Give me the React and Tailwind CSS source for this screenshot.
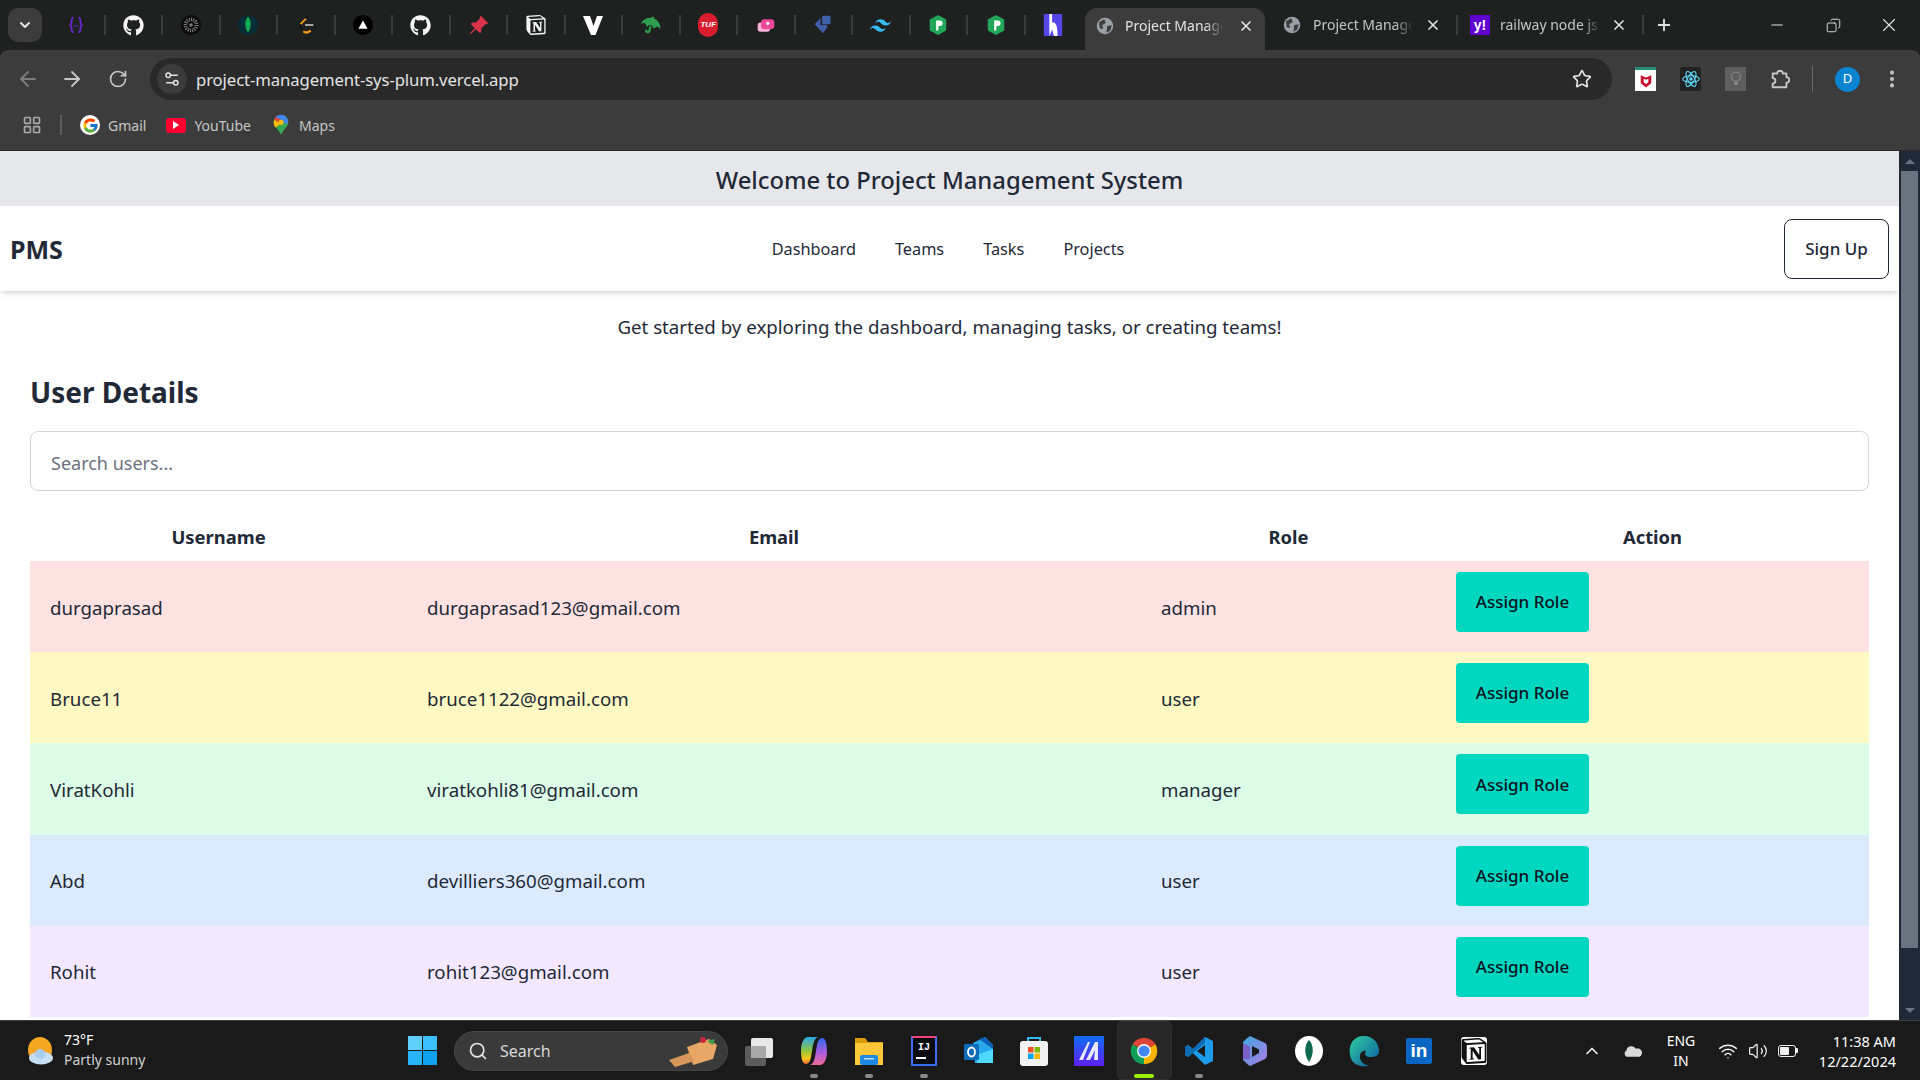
import React from "react";
import { ArrowLeft, ArrowRight, RotateCw, Star, EllipsisVertical, X, Plus, Minus, Copy, LayoutGrid, Search, ChevronDown, ChevronUp, Wifi, Volume2, Settings2 } from "lucide-react";
import { FaGithub, FaUmbrella } from "react-icons/fa";
import { SiNotion, SiTailwindcss } from "react-icons/si";
import { FcGoogle } from "react-icons/fc";
import { BsPinAngleFill } from "react-icons/bs";

const S = ({ children, size = 20, view = "0 0 24 24" }) => (
  <svg width={size} height={size} viewBox={view} className="block shrink-0">{children}</svg>
);

const PHex = () => (
  <S size={22}>
    <path d="M12 1 L21 6 V18 L12 23 L3 18 V6 Z" fill="#22a75a" />
    <path d="M10 7 H14 A3 3 0 0 1 14 13 H12.4 V18 H10 Z" fill="#fff" />
  </S>
);

const EarthGlobe = () => (
  <S size={18}>
    <circle cx="12" cy="12" r="11" fill="#9aa0a6" />
    <path d="M4 7 L11 3 L13 8 L8 11 L10 16 L5 15 Z" fill="#3c3c3c" />
    <path d="M15 12 L21 11 L19 18 L14 21 Z" fill="#3c3c3c" />
  </S>
);

const tabIcons = [
  <S key="a"><path d="M9 3 C6 3 7 7 6.500 10 C6 11.500 5 12 4 12 C5 12 6 12.500 6.500 14 C7 17 6 21 9 21 M15 3 C18 3 17 7 17.500 10 C18 11.500 19 12 20 12 C19 12 18 12.500 17.500 14 C17 17 18 21 15 21" stroke="#6d28d9" strokeWidth="2" fill="none" /><path d="M9 12 Q10 14 12 13 Q14 14 15 12" stroke="#6d28d9" strokeWidth="1" fill="none" /></S>,
  <FaGithub key="b" size={21} color="#f5f5f5" />,
  <S key="c" size={22}><circle cx="12" cy="12" r="11" fill="#0b0b0b" /><circle cx="12" cy="12" r="6" fill="none" stroke="#8b8b8b" strokeWidth="4" strokeDasharray="1 1.300" /><circle cx="12" cy="12" r="2" fill="#777" /></S>,
  <S key="d" size={22}><circle cx="12" cy="12" r="11" fill="#062f38" /><path d="M12 3 C16 7 16 15 12 20 C8 15 8 7 12 3 Z" fill="#13aa52" /></S>,
  <S key="e" size={22}><path d="M14 2 L7 10 C5 13 6 16 8 17" stroke="#111" strokeWidth="2" fill="none" /><path d="M12 5 L6 11" stroke="#f89f1b" strokeWidth="2" fill="none" /><path d="M9 19 C12 21 15 20 17 18" stroke="#f89f1b" strokeWidth="2.400" fill="none" /><path d="M11 12 H20" stroke="#b3b3b3" strokeWidth="2" /></S>,
  <S key="f" size={22}><circle cx="12" cy="12" r="11" fill="#000" /><path d="M12 7 L17 16 H7 Z" fill="#fff" /></S>,
  <FaGithub key="g" size={21} color="#f5f5f5" />,
  <BsPinAngleFill key="h" size={21} color="#d9344a" />,
  <SiNotion key="i" size={20} color="#f5f5f5" />,
  <S key="j" size={24}><path d="M2 3 H9 L12.500 13 L16 3 H22 L14.500 22 H10 Z" fill="#fff" /></S>,
  <FaUmbrella key="k" size={20} color="#2f9e4f" style={{ transform: "rotate(15deg)" }} />,
  <div key="l" className="w-5 h-6 rounded-full bg-[#d91c2e] flex items-center justify-center text-[8px] font-black italic text-white leading-none font-['Liberation_Sans',sans-serif]">TUF</div>,
  <S key="m"><rect x="2" y="9" width="15" height="11" rx="3.500" fill="#f8b4d9" /><rect x="6" y="5" width="16" height="12" rx="4" fill="#ec4899" /><circle cx="14" cy="10" r="2" fill="#fff" /></S>,
  <S key="n"><path d="M2 11 L9 4 V12 H17 V15 L12 22 Z" fill="#3f5fa8" /><rect x="11" y="1" width="10" height="10" rx="1" fill="#3f5fa8" /></S>,
  <SiTailwindcss key="o" size={21} color="#38bdf8" />,
  <PHex key="p" />,
  <PHex key="q" />,
  <S key="r" size={22}><rect x="2" y="0" width="20" height="24" fill="#5546e8" /><path d="M8 0 H11 V9 C15 9 17 12 17 24 H13 L11 17 L8 24 Z" fill="#fff" /></S>,
];

const TabSep = () => <div className="w-[2px] h-[20px] bg-[#3a3c3c] shrink-0" />;

const TabLabel = ({ w, children, active }) => (
  <div className={`${w} overflow-hidden whitespace-nowrap text-[14px] -mt-[2px] [mask-image:linear-gradient(to_right,black_82%,transparent)] ${active ? "text-[#e3e3e3]" : "text-[#c4c7c5]"}`}>{children}</div>
);

const TabStrip = () => (
  <div className="h-[50px] bg-[#1f2121] flex items-end shrink-0">
    <div className="self-start mt-[8px] ml-[8px] w-[34px] h-[34px] rounded-[10px] bg-[#3c3c3c] flex items-center justify-center shrink-0">
      <ChevronDown size={16} color="#e3e3e3" strokeWidth={3} />
    </div>
    <div className="self-start flex items-center h-[50px] ml-[6px] shrink-0">
      {tabIcons.map((ic, i) => (
        <React.Fragment key={i}>
          <div className="w-[55.5px] h-[50px] flex items-center justify-center shrink-0">{ic}</div>
          {i < tabIcons.length - 1 && <TabSep />}
        </React.Fragment>
      ))}
    </div>
    <div className="w-[180px] h-[42px] ml-[4px] bg-[#3c3c3c] rounded-t-[12px] flex items-center pl-[11px] gap-[11px] shrink-0 pb-[6px]">
      <EarthGlobe />
      <TabLabel w="w-[98px]" active>Project Management</TabLabel>
      <X size={16} color="#e3e3e3" className="ml-[4px]" strokeWidth={2.500} />
    </div>
    <div className="w-[191px] h-[50px] flex items-center pl-[18px] gap-[12px] shrink-0">
      <EarthGlobe />
      <TabLabel w="w-[100px]">Project Management</TabLabel>
      <X size={16} color="#e3e3e3" strokeWidth={2.500} />
    </div>
    <div className="self-center"><TabSep /></div>
    <div className="w-[184px] h-[50px] flex items-center pl-[12px] gap-[10px] shrink-0">
      <div className="w-5 h-5 bg-[#5f01d1] flex items-center justify-center text-white font-bold text-[14px] leading-none font-['Liberation_Sans',sans-serif]">y!</div>
      <TabLabel w="w-[101px]">railway node js deploy</TabLabel>
      <X size={16} color="#e3e3e3" strokeWidth={2.500} />
    </div>
    <div className="self-center"><TabSep /></div>
    <div className="self-center ml-[11px]"><Plus size={18} color="#e3e3e3" strokeWidth={2.500} /></div>
    <div className="self-center ml-auto flex items-center shrink-0 pr-[3px]">
      <div className="w-[56px] flex justify-center"><Minus size={18} color="#e3e3e3" strokeWidth={1.500} /></div>
      <div className="w-[56px] flex justify-center"><Copy size={15} color="#e3e3e3" strokeWidth={1.500} className="-scale-x-100" /></div>
      <div className="w-[56px] flex justify-center"><X size={22} color="#e3e3e3" strokeWidth={1.200} /></div>
    </div>
  </div>
);

const Toolbar = () => (
  <div className="h-[50px] bg-[#3c3c3c] flex items-end shrink-0 rounded-t-[8px]">
    <div className="h-[50px] pt-[8px] flex items-center w-[150px] pl-[16px] gap-[20px] shrink-0">
      <ArrowLeft size={24} color="#7b7b7b" strokeWidth={1.800} />
      <ArrowRight size={24} color="#c4c7c5" strokeWidth={1.800} />
      <RotateCw size={20} color="#c4c7c5" strokeWidth={2} className="ml-[4px]" />
    </div>
    <div className="w-[1462px] h-[42px] rounded-[21px] bg-[#292929] flex items-center pl-[7px] shrink-0">
      <div className="w-[30px] h-[30px] rounded-full bg-[#3c3c3c] flex items-center justify-center">
        <Settings2 size={18} color="#e3e3e3" />
      </div>
      <div className="ml-[9px] mt-[1px] text-[#e3e3e3] text-[16.7px] tracking-[-0.1px]">project-management-sys-plum.vercel.app</div>
      <div className="ml-auto mr-[20px]"><Star size={20} color="#e3e3e3" strokeWidth={2} /></div>
    </div>
    <div className="h-[50px] pt-[8px] flex items-center shrink-0 pl-[23px]">
      <div className="w-[21px] h-[24px] bg-white flex flex-col">
        <div className="h-[3px] bg-[#2a8d7a]" />
        <div className="flex-1 flex items-center justify-center">
          <S size={14}><path d="M3 2 L12 6 L21 2 V16 L12 23 L3 16 Z" fill="#c8102e" /><path d="M8 8 L12 10 L16 8 V14 L12 17 L8 14 Z" fill="#fff" /></S>
        </div>
      </div>
      <div className="ml-[24px] w-[21px] h-[24px] rounded-[2px] bg-[#222] flex items-center justify-center">
        <S size={20}><g fill="none" stroke="#61dafb" strokeWidth="1.300"><ellipse cx="12" cy="12" rx="10" ry="4" /><ellipse cx="12" cy="12" rx="10" ry="4" transform="rotate(60 12 12)" /><ellipse cx="12" cy="12" rx="10" ry="4" transform="rotate(120 12 12)" /></g><circle cx="12" cy="12" r="2" fill="#61dafb" /></S>
      </div>
      <div className="ml-[24px] w-[21px] h-[24px] bg-[#5f5f5f] flex items-center justify-center">
        <S size={18}><circle cx="12" cy="9" r="6" fill="none" stroke="#8a8a8a" strokeWidth="1.500" /><rect x="9.500" y="16" width="5" height="4" fill="#8a8a8a" /></S>
      </div>
      <div className="ml-[23px]">
        <S size={22}><path d="M4 6 H9 A3 3 0 0 1 15 6 H19 V10 A3 3 0 0 1 19 16 V21 H4 V17 C6 17 7 15.500 7 14 S6 11 4 11 Z" fill="none" stroke="#c4c7c5" strokeWidth="2" strokeLinejoin="round" /></S>
      </div>
      <div className="ml-[21px] w-[1px] h-[26px] bg-[#6a6a6a]" />
      <div className="ml-[22px] w-[25px] h-[25px] rounded-full bg-[#0b84d1] flex items-center justify-center text-[13px] text-white">D</div>
      <div className="ml-[21px]"><EllipsisVertical size={22} color="#c4c7c5" strokeWidth={2.500} /></div>
    </div>
  </div>
);

const Bookmark = ({ icon, label, ml }) => (
  <div className={`flex items-center gap-[8px] ${ml}`}>
    <div className="w-[20px] h-[20px] flex items-center justify-center">{icon}</div>
    <span className="text-[14px] mt-[1px] text-[#c4c7c5]">{label}</span>
  </div>
);

const Bookmarks = () => (
  <div className="h-[50px] bg-[#3c3c3c] flex items-center pl-[22px] shrink-0">
    <LayoutGrid size={20} color="#a8a8a8" strokeWidth={2} />
    <div className="ml-[18px] w-[2px] h-[20px] bg-[#5c5c5c]" />
    <Bookmark ml="ml-[18px]" label="Gmail" icon={<div className="w-5 h-5 rounded-full bg-white flex items-center justify-center"><FcGoogle size={17} /></div>} />
    <Bookmark ml="ml-[20px]" label="YouTube" icon={<div className="w-5 h-[15px] rounded-[3px] bg-[#ff0033] flex items-center justify-center"><div className="w-0 h-0 border-y-[4px] border-y-transparent border-l-[6px] border-l-white" /></div>} />
    <Bookmark ml="ml-[20px]" label="Maps" icon={<S size={22}><path d="M12 1 C7 1 4 5 4 9 C4 14 10 17 12 23 C14 17 20 14 20 9 C20 5 17 1 12 1 Z" fill="#34a853" /><path d="M18 3.500 L12 9 L19 11 C20 9 20 6 18 3.500 Z" fill="#4285f4" /><path d="M5 6 L11 11 L6 15 C4.500 13 4 11 4 9 Z" fill="#fbbc04" /><path d="M6 3 C9 0 15 0 18 3.500 L14 8 Z" fill="#4285f4" /><path d="M6 3 L5 6 L11 11 L14 8 Z" fill="#ea4335" /><circle cx="12" cy="9" r="2.800" fill="#fbbc04" /></S>} />
  </div>
);

const rows = [
  ["durgaprasad", "durgaprasad123@gmail.com", "admin", "bg-[#fee2e2]"],
  ["Bruce11", "bruce1122@gmail.com", "user", "bg-[#fef9c3]"],
  ["ViratKohli", "viratkohli81@gmail.com", "manager", "bg-[#dcfce7]"],
  ["Abd", "devilliers360@gmail.com", "user", "bg-[#dbeafe]"],
  ["Rohit", "rohit123@gmail.com", "user", "bg-[#f3e8ff]"],
];

const UserTable = () => (
  <table className="w-full table-fixed border-collapse">
    <colgroup>
      <col className="w-[377px]" />
      <col className="w-[734px]" />
      <col className="w-[295px]" />
      <col className="w-[433px]" />
    </colgroup>
    <thead>
      <tr className="h-[46px] text-[18.4px] text-[#1f2937]">
        <th className="font-bold pb-[3px]">Username</th>
        <th className="font-bold pb-[3px]">Email</th>
        <th className="font-bold pb-[3px]">Role</th>
        <th className="font-bold pb-[3px]">Action</th>
      </tr>
    </thead>
    <tbody>
      {rows.map((r) => (
        <tr key={r[0]} className={`${r[3]} h-[91.2px] text-[18.7px] text-[#1f2937]`}>
          <td className="px-[20px] pt-[2px]">{r[0]}</td>
          <td className="px-[20px] pt-[2px]">{r[1]}</td>
          <td className="px-[20px] pt-[2px]">{r[2]}</td>
          <td className="px-[20px] align-top pt-[11px]">
            <button className="w-[133px] h-[60px] rounded-[4px] bg-[#00d7c0] text-[17px] font-medium text-[#0b1320]">Assign Role</button>
          </td>
        </tr>
      ))}
    </tbody>
  </table>
);

const Page = () => (
  <div className="flex flex-1 min-h-0 border-t border-[#2a2a2a]">
    <div className="flex-1 min-w-0 bg-white overflow-hidden text-[#1f2937]">
      <div className="h-[55px] pt-[4px] bg-[#e5e7eb] flex items-center justify-center text-[23.8px] font-medium">Welcome to Project Management System</div>
      <nav className="h-[85px] bg-white shadow-md flex items-center justify-between pl-[10px] pr-[10px] relative">
        <div className="text-[25px] font-bold w-[100px] pt-[2px]">PMS</div>
        <div className="flex items-center gap-[39px] text-[16.3px] pt-[2px] translate-x-[1px]">
          <span>Dashboard</span>
          <span>Teams</span>
          <span>Tasks</span>
          <span>Projects</span>
        </div>
        <button className="w-[105px] h-[60px] rounded-[8px] border border-[#1f2937] text-[17px] font-medium">Sign Up</button>
      </nav>
      <p className="text-center text-[18.7px] leading-[28px] pt-[22px]">Get started by exploring the dashboard, managing tasks, or creating teams!</p>
      <div className="px-[30px] pt-[33px]">
        <h2 className="text-[28px] leading-[36px] font-bold">User Details</h2>
        <input
          readOnly
          placeholder="Search users..."
          className="mt-[21px] mb-[24px] block w-full h-[60px] rounded-[8px] border border-[#d1d5db] pl-[20px] pr-[20px] pt-[3px] text-[18px] placeholder:text-[#6b7280] outline-none"
        />
        <UserTable />
      </div>
    </div>
    <div className="w-[21px] bg-[#1f2937] flex flex-col items-center shrink-0 px-[2px]">
      <div className="h-[20px] flex items-center justify-center">
        <div className="w-0 h-0 border-x-[5px] border-x-transparent border-b-[5px] border-b-[#6b7280]" />
      </div>
      <div className="w-full h-[777px] bg-[#6b7280]" />
      <div className="mt-auto h-[20px] flex items-center justify-center">
        <div className="w-0 h-0 border-x-[5px] border-x-transparent border-t-[5px] border-t-[#6b7280]" />
      </div>
    </div>
  </div>
);

const taskIcons = [
  <S key="a" size={32} view="0 0 32 32"><rect x="2" y="11" width="21" height="20" rx="2" fill="#5c5c5c" /><rect x="8" y="3" width="22" height="20" rx="2" fill="#e8e8e8" /><rect x="8" y="11" width="15" height="12" fill="#a9a9a9" /></S>,
  <S key="b" size={32} view="0 0 32 32"><defs><linearGradient id="cop" x1="0" y1="0" x2="0" y2="1"><stop offset="0" stopColor="#2ea8f0" /><stop offset="0.5" stopColor="#8cc63f" /><stop offset="0.8" stopColor="#f5c518" /><stop offset="1" stopColor="#f0643c" /></linearGradient><linearGradient id="cop2" x1="0" y1="0" x2="0" y2="1"><stop offset="0" stopColor="#2f6cf0" /><stop offset="0.5" stopColor="#a35be0" /><stop offset="1" stopColor="#f06a9a" /></linearGradient></defs><path d="M10 2 H20 C17 3 16 6 15 10 L13 22 C12 27 10 29 8 29 C4 29 3 22 3 15 C3 8 6 2 10 2 Z" fill="url(#cop)" /><path d="M22 30 H12 C15 29 16 26 17 22 L19 10 C20 5 22 3 24 3 C28 3 29 10 29 17 C29 24 26 30 22 30 Z" fill="url(#cop2)" /></S>,
  <S key="c" size={32} view="0 0 32 32"><path d="M2 3 H12 L15 7 H30 V30 H2 Z" fill="#d99a0b" /><path d="M2 8 H30 V30 H2 Z" fill="#fcc83a" /><rect x="7" y="20" width="18" height="10" rx="2" fill="#1e88e5" /><rect x="11" y="23" width="10" height="1.500" fill="#bfe0ff" /></S>,
  <div key="d" className="w-[26px] h-[30px] bg-[#0b0b14] border-2 border-[#3b6df0] border-t-[#f0437c] flex flex-col items-center justify-center text-[10px] font-bold leading-none text-white font-['Liberation_Mono',monospace]">IJ<div className="w-[10px] h-[2px] bg-white mt-[4px] -ml-[6px]" /></div>,
  <S key="e" size={32} view="0 0 32 32"><path d="M10 8 L22 2 L30 10 V28 H12 Z" fill="#28a8ea" /><path d="M16 4 L30 14 V10 L22 2 Z" fill="#0a5fb5" /><path d="M14 20 L30 14 V28 H14 Z" fill="#50d9ff" /><rect x="1" y="9" width="15" height="16" rx="1.500" fill="#0f6cbd" /><ellipse cx="8.500" cy="17" rx="3.500" ry="4.500" fill="none" stroke="#fff" strokeWidth="1.800" /></S>,
  <S key="f" size={32} view="0 0 32 32"><path d="M10 7 V3 H22 V7" fill="none" stroke="#36b9f0" strokeWidth="2" /><rect x="2" y="6" width="28" height="25" rx="3" fill="#f2f2f2" /><rect x="10" y="12" width="5.500" height="5.500" fill="#f25022" /><rect x="16.500" y="12" width="5.500" height="5.500" fill="#7fba00" /><rect x="10" y="18.500" width="5.500" height="5.500" fill="#00a4ef" /><rect x="16.500" y="18.500" width="5.500" height="5.500" fill="#ffb900" /></S>,
  <S key="g" size={32} view="0 0 32 32"><defs><linearGradient id="mv" x1="0" y1="0" x2="0" y2="1"><stop offset="0" stopColor="#0f6cf0" /><stop offset="1" stopColor="#5f1ff0" /></linearGradient></defs><rect x="1" y="1" width="30" height="30" fill="url(#mv)" /><path d="M6 25 L15 7 H17 L10 25 Z M13 25 L22 7 H25 V25 H21 L22 15 L17 25 Z" fill="#e8e8ff" /></S>,
  <S key="h" size={32} view="0 0 24 24"><path d="M12 12 L3.340 7 A10 10 0 0 1 20.660 7 Z" fill="#db4437" /><path d="M12 12 L20.660 7 A10 10 0 0 1 12 22 Z" fill="#f4b400" /><path d="M12 12 L12 22 A10 10 0 0 1 3.340 7 Z" fill="#0f9d58" /><circle cx="12" cy="12" r="5.200" fill="#fff" /><circle cx="12" cy="12" r="4.200" fill="#4285f4" /></S>,
  <S key="i" size={32} view="0 0 32 32"><path d="M22 2 L30 6 V26 L22 30 L10 18 L5 22 L2 20 V12 L5 10 L10 14 Z M22 10 L14 16 L22 22 Z" fill="#1e9be8" fillRule="evenodd" /><path d="M22 2 L10 14 L5 10 L2 12 V20 L5 22 L22 8 Z" fill="#0a6db5" /></S>,
  <S key="j" size={32} view="0 0 32 32"><defs><linearGradient id="cp" x1="0" y1="0" x2="1" y2="1"><stop offset="0" stopColor="#3ba7dc" /><stop offset="1" stopColor="#b07ae8" /></linearGradient></defs><path d="M12 1 L27 8 C29 9 29 11 29 13 V20 C29 23 27 24 25 25 L12 31 C9 29 7 27 5 25 V7 C7 5 9 3 12 1 Z" fill="url(#cp)" /><path d="M14 11 L21 14.500 V18 L14 22 Z" fill="#1a1a1a" /><path d="M5 8 L12 12 V24 L5 24 Z" fill="#7a5fc8" /></S>,
  <S key="k" size={32} view="0 0 32 32"><ellipse cx="16" cy="16" rx="14" ry="15" fill="#fff" /><path d="M16 5 C21 10 21 20 16 27 C11 20 11 10 16 5 Z" fill="#0f6b4f" /></S>,
  <S key="l" size={32} view="0 0 32 32"><defs><linearGradient id="ed" x1="0" y1="0" x2="1" y2="1"><stop offset="0" stopColor="#2fd0a0" /><stop offset="1" stopColor="#0c59a4" /></linearGradient></defs><path d="M16 1 C25 1 31 8 31 16 C31 21 27 22 22 22 C17 22 16 19 18 16 C15 15 11 18 12 23 C13 28 18 31 22 30 C18 32 10 32 5 27 C-1 20 0 1 16 1 Z" fill="url(#ed)" /></S>,
  <div key="m" className="w-[26px] h-[26px] rounded-[2px] bg-[#0a66c2] flex items-center justify-center text-white font-bold text-[19px] leading-none font-['Liberation_Sans',sans-serif]">in</div>,
  <div key="n" className="w-[26px] h-[28px] rounded-[3px] bg-white flex items-center justify-center"><SiNotion size={26} color="#111" /></div>,
];

const dots = { 1: "gray", 2: "gray", 3: "gray", 8: "gray" };

const Taskbar = () => (
  <div className="h-[60px] bg-[#1a1a1a] border-t border-[#3f3f3f] flex items-center shrink-0 text-white">
    <div className="w-[408px] flex items-center pl-[26px] gap-[10px] shrink-0">
      <S size={28} view="0 0 28 28">
        <ellipse cx="14" cy="13" rx="12" ry="13" fill="#f5a623" />
        <ellipse cx="15" cy="21" rx="12" ry="6.500" fill="#c7dff5" />
        <circle cx="14" cy="17" r="5" fill="#a9cdf0" />
      </S>
      <div className="flex flex-col text-[14px] leading-[20px] -mt-[1px]">
        <span className="text-[14px]">73°F</span>
        <span className="text-[#d1d1d1]">Partly sunny</span>
      </div>
    </div>
    <S size={29} view="0 0 29 29">
      <rect x="0" y="0" width="14" height="14" fill="#5fd0fb" />
      <rect x="15" y="0" width="14" height="14" fill="#3ac0fa" />
      <rect x="0" y="15" width="14" height="14" fill="#28b4f8" />
      <rect x="15" y="15" width="14" height="14" fill="#12a0f0" />
    </S>
    <div className="ml-[17px] w-[274px] h-[40px] rounded-full bg-[#3a3a3a] flex items-center pl-[13px] shrink-0 border border-[#454545]">
      <Search size={20} color="#e3e3e3" strokeWidth={2} />
      <span className="ml-[12px] text-[16px] text-[#d8d8d8]">Search</span>
      <div className="ml-auto mr-[8px]">
        <S size={52} view="0 0 52 32">
          <path d="M20 12 L42 4 L50 10 L46 24 L26 30 Z" fill="#e8a765" />
          <path d="M2 25 L22 18 L28 26 L8 32 Z" fill="#d9965a" />
          <circle cx="36" cy="5" r="3" fill="#c8283c" />
          <path d="M40 6 L48 4 L46 10 Z" fill="#3a9a4a" />
        </S>
      </div>
    </div>
    <div className="flex ml-[3.500px] shrink-0">
      {taskIcons.map((ic, i) => (
        <div key={i} className={`w-[55px] h-[59px] flex flex-col items-center justify-center relative ${i === 7 ? "bg-[#272727] rounded-[5px] border border-[#2f2f2f]" : ""}`}>
          {ic}
          {dots[i] && <div className="absolute bottom-[2px] w-[8px] h-[4px] rounded-full bg-[#8a8a8a]" />}
          {i === 7 && <div className="absolute bottom-[1px] w-[20px] h-[4px] rounded-full bg-[#9cf00c]" />}
        </div>
      ))}
    </div>
    <div className="ml-auto flex items-center pr-[24px] shrink-0">
      <ChevronUp size={20} color="#f0f0f0" strokeWidth={2} />
      <div className="ml-[20px]">
        <S size={21} view="0 0 24 16"><path d="M5 15 A4 4 0 0 1 5 8 A6 6 0 0 1 16 6 A4.500 4.500 0 0 1 20 15 Z" fill="#d8d8d8" /></S>
      </div>
      <div className="ml-[19px] w-[38px] flex flex-col items-center text-[14px] leading-[20px]"><span>ENG</span><span>IN</span></div>
      <div className="ml-[18px]"><Wifi size={20} color="#f0f0f0" strokeWidth={1.800} /></div>
      <div className="ml-[10px]"><Volume2 size={20} color="#f0f0f0" strokeWidth={1.500} /></div>
      <div className="ml-[10px] w-[18px] h-[12px] border border-[#f0f0f0] rounded-[3px] p-[1px]"><div className="w-[9px] h-full bg-[#f0f0f0] rounded-[1px]" /></div>
      <div className="w-[2px] h-[5px] bg-[#f0f0f0] rounded-r-[1px]" />
      <div className="ml-[20px] w-[78px] flex flex-col items-end text-[14.5px] leading-[20px] whitespace-nowrap"><span>11:38 AM</span><span>12/22/2024</span></div>
    </div>
  </div>
);

export default function App() {
  return (
    <div className="w-[1920px] h-[1080px] overflow-hidden flex flex-col bg-[#1f2121] font-['Noto_Sans','Open_Sans',sans-serif]">
      <TabStrip />
      <Toolbar />
      <Bookmarks />
      <Page />
      <Taskbar />
    </div>
  );
}
